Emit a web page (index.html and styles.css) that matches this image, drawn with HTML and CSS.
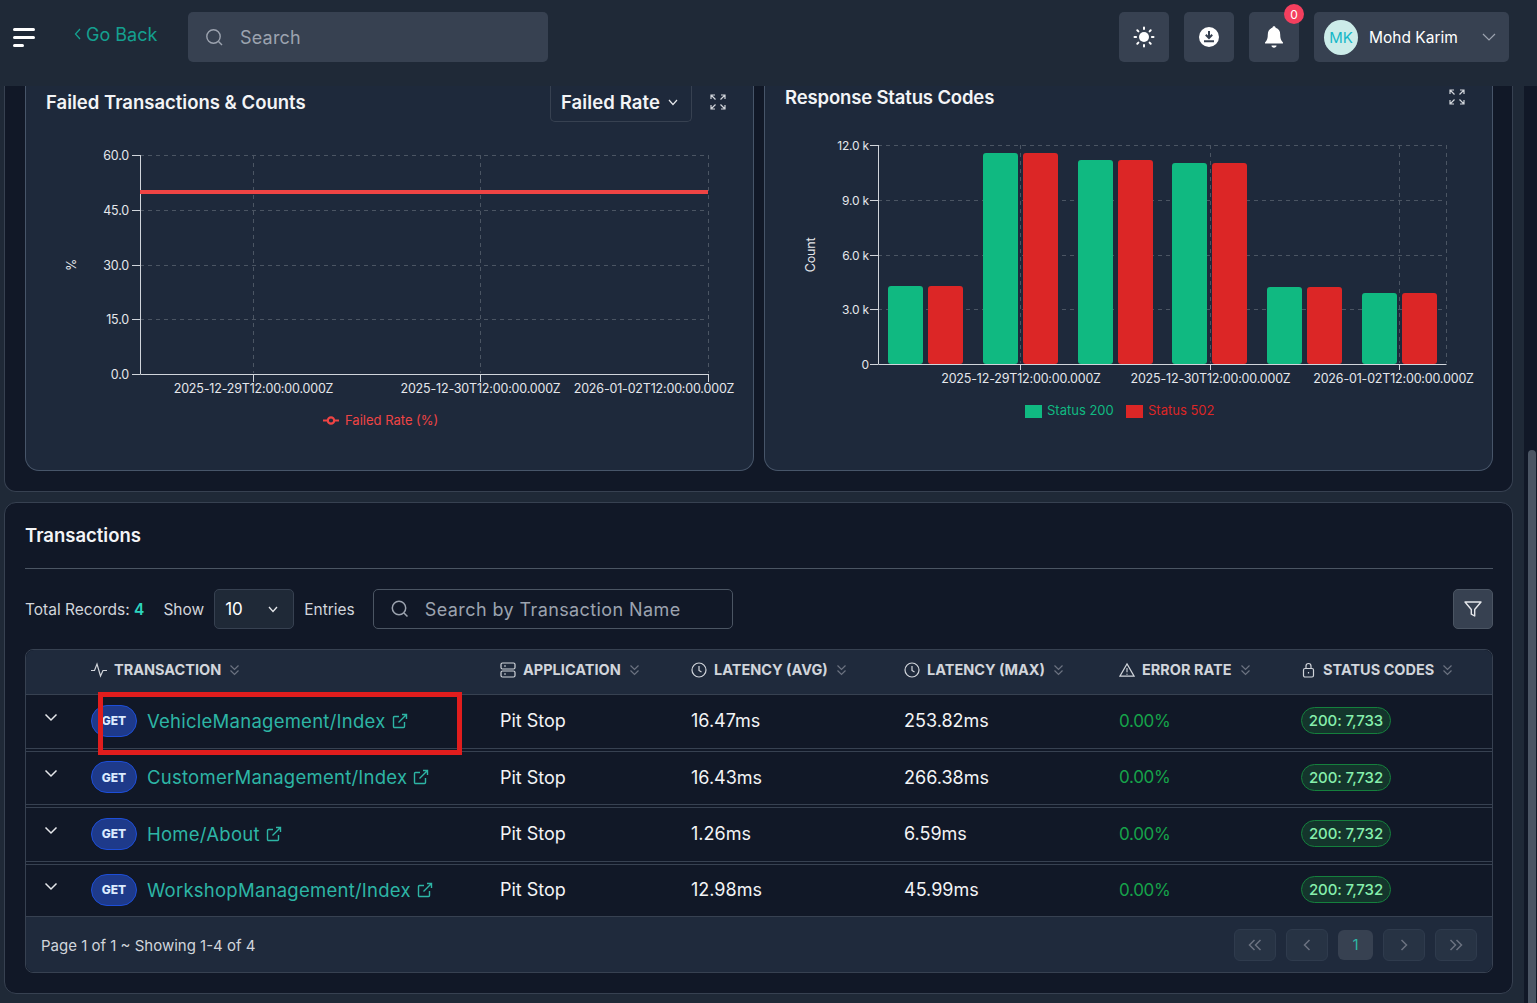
FILE: index.html
```html
<!DOCTYPE html>
<html lang="en">
<head>
<meta charset="utf-8">
<title>Transactions</title>
<link rel="stylesheet" href="styles.css">
</head>
<body>
<header class="topbar">
  <button class="burger" aria-label="Menu"><i class="b1"></i><i class="b2"></i><i class="b3"></i></button>
  <a class="goback"><svg width="8" height="12" viewBox="0 0 8 12"><path d="M6 1 1.5 6 6 11" fill="none" stroke="currentColor" stroke-width="1.3"/></svg>Go Back</a>
  <div class="topsearch"><svg width="20" height="20" viewBox="0 0 20 20" fill="none" stroke="#9ca3af" stroke-width="1.4"><circle cx="9.5" cy="9.5" r="6.7"/><path d="m14.5 14.5 3.5 3.5"/></svg><span>Search</span></div>
  <div class="spacer"></div>
  <button class="iconbtn"><svg width="22" height="22" viewBox="0 0 22 22" fill="#fff"><circle cx="11" cy="11" r="5"/><g stroke="#fff" stroke-width="2" stroke-linecap="round"><path d="M11 1.5v1.6M11 18.9v1.6M1.5 11h1.6M18.9 11h1.6M4.3 4.3l1.1 1.1M16.6 16.6l1.1 1.1M4.3 17.7l1.1-1.1M16.6 5.4l1.1-1.1"/></g></svg></button>
  <button class="iconbtn"><svg width="22" height="22" viewBox="0 0 22 22"><circle cx="11" cy="11" r="10" fill="#fff"/><path d="M11 5v6.5M7.8 8.8 11 12l3.2-3.2M6 15.3h10" fill="none" stroke="#374151" stroke-width="2"/></svg></button>
  <button class="iconbtn bell"><svg width="20" height="24" viewBox="0 0 20 24" fill="#fff"><path d="M10 1.2c1 0 1.6.7 1.6 1.6 3.2.8 4.6 3.4 4.6 6.6 0 3.5.7 6 2.6 7.9.5.6.2 1.3-.6 1.3H1.8c-.8 0-1.1-.7-.6-1.3 1.9-1.9 2.6-4.4 2.6-7.9 0-3.2 1.4-5.8 4.6-6.6 0-.9.6-1.6 1.6-1.6z"/><path d="M7.5 20.5h5c0 1.3-1 2.2-2.5 2.2s-2.5-.9-2.5-2.2z"/></svg><span class="badge">0</span></button>
  <div class="user"><span class="avatar">MK</span><span class="uname">Mohd Karim</span><svg width="14" height="8" viewBox="0 0 14 8"><path d="m1 1 6 6 6-6" fill="none" stroke="#9ca3af" stroke-width="1.2"/></svg></div>
</header>

<main class="content">
  <section class="panel charts">
    <article class="chartcard left">
      <div class="charthead">
        <h2>Failed Transactions &amp; Counts</h2>
        <div class="headtools">
          <div class="rateselect">Failed Rate <svg width="10" height="7" viewBox="0 0 10 7"><path d="m1 1 4 4.5L9 1" fill="none" stroke="#e5e7eb" stroke-width="1.2"/></svg></div>
          <svg class="expand" width="16" height="16" viewBox="0 0 16 16" fill="none" stroke="#d1d5db" stroke-width="1.2"><path d="M1 5V1h4M1 1l4.5 4.5M11 1h4v4M15 1l-4.5 4.5M1 11v4h4M1 15l4.5-4.5M15 11v4h-4M15 15l-4.5-4.5"/></svg>
        </div>
      </div>
      <svg class="plot" width="728" height="310" viewBox="1 30 728 310">
        <g class="grid">
          <path d="M115 62.5H683M115 117.5H683M115 172.5H683M115 226.5H683M228.5 62V280M455.5 62V280M683.5 62V280"/>
        </g>
        <path class="axis" d="M115.5 62V281.5H683.5M107 62.5h8M107 117.5h8M107 172.5h8M107 226.5h8M107 281.5h8M228.5 281v8M455.5 281v8M683.5 281v8"/>
        <rect x="115" y="97" width="568" height="4" fill="#ef4444"/>
        <g class="ylab" text-anchor="end">
          <text x="104" y="67">60.0</text><text x="104" y="122">45.0</text><text x="104" y="177">30.0</text><text x="104" y="231">15.0</text><text x="104" y="286">0.0</text>
        </g>
        <text class="ylab" transform="translate(51 172) rotate(-90)" text-anchor="middle">%</text>
        <g class="ylab" text-anchor="middle">
          <text x="228.5" y="300">2025-12-29T12:00:00.000Z</text><text x="455.5" y="300">2025-12-30T12:00:00.000Z</text><text x="629" y="300">2026-01-02T12:00:00.000Z</text>
        </g>
        <path d="M298 327.5h16" stroke="#ef4444" stroke-width="2"/><circle cx="306" cy="327.5" r="3.2" fill="#1e293b" stroke="#ef4444" stroke-width="2.2"/>
        <text class="legend" x="320" y="332" fill="#ef4444">Failed Rate (%)</text>
      </svg>
    </article>
    <article class="chartcard right">
      <div class="charthead">
        <h2 class="raised">Response Status Codes</h2>
        <div class="headtools">
          <svg class="expand raisedicon" width="16" height="16" viewBox="0 0 16 16" fill="none" stroke="#d1d5db" stroke-width="1.2"><path d="M1 5V1h4M1 1l4.5 4.5M11 1h4v4M15 1l-4.5 4.5M1 11v4h4M1 15l4.5-4.5M15 11v4h-4M15 15l-4.5-4.5"/></svg>
        </div>
      </div>
      <svg class="plot" width="728" height="310" viewBox="1 30 728 310">
        <g class="grid">
          <path d="M114 52.5H682M114 107.5H682M114 162.5H682M114 216.5H682M256.5 52V270M446.5 52V270M635.5 52V270M682.5 52V270"/>
        </g>
        <g class="bars">
          <rect class="g" x="124" y="193" width="35" height="78" rx="3"/><rect class="r" x="164" y="193" width="35" height="78" rx="3"/>
          <rect class="g" x="219" y="60" width="35" height="211" rx="3"/><rect class="r" x="259" y="60" width="35" height="211" rx="3"/>
          <rect class="g" x="314" y="67" width="35" height="204" rx="3"/><rect class="r" x="354" y="67" width="35" height="204" rx="3"/>
          <rect class="g" x="408" y="70" width="35" height="201" rx="3"/><rect class="r" x="448" y="70" width="35" height="201" rx="3"/>
          <rect class="g" x="503" y="194" width="35" height="77" rx="3"/><rect class="r" x="543" y="194" width="35" height="77" rx="3"/>
          <rect class="g" x="598" y="200" width="35" height="71" rx="3"/><rect class="r" x="638" y="200" width="35" height="71" rx="3"/>
        </g>
        <path class="axis" d="M114.5 52V271.5H682.5M106 52.5h8M106 107.5h8M106 162.5h8M106 216.5h8M106 271.5h8M256.5 271v6M446.5 271v6M635.5 271v6"/>
        <g class="ylab small" text-anchor="end">
          <text x="105" y="57">12.0 k</text><text x="105" y="112">9.0 k</text><text x="105" y="167">6.0 k</text><text x="105" y="221">3.0 k</text><text x="105" y="276">0</text>
        </g>
        <text class="ylab" transform="translate(51 162) rotate(-90)" text-anchor="middle">Count</text>
        <g class="ylab" text-anchor="middle">
          <text x="257" y="290">2025-12-29T12:00:00.000Z</text><text x="446.5" y="290">2025-12-30T12:00:00.000Z</text><text x="629.5" y="290">2026-01-02T12:00:00.000Z</text>
        </g>
        <rect class="g" x="261" y="312" width="17" height="13"/>
        <text class="legend" x="283" y="322" fill="#10b981">Status 200</text>
        <rect class="r" x="362" y="312" width="17" height="13"/>
        <text class="legend" x="384" y="322" fill="#dc2626">Status 502</text>
      </svg>
    </article>
  </section>

  <section class="panel transactions">
    <h3>Transactions</h3>
    <div class="toolbar">
      <span class="tlabel">Total Records: <b>4</b></span>
      <span class="tlabel">Show</span>
      <div class="entries"><span>10</span><svg width="10" height="7" viewBox="0 0 10 7"><path d="m1 1 4 4.5L9 1" fill="none" stroke="#e5e7eb" stroke-width="1.3"/></svg></div>
      <span class="tlabel">Entries</span>
      <div class="txsearch"><svg width="20" height="20" viewBox="0 0 20 20" fill="none" stroke="#9ca3af" stroke-width="1.5"><circle cx="9" cy="9" r="6.7"/><path d="m14 14 3.5 3.5"/></svg><span>Search by Transaction Name</span></div>
      <div class="spacer"></div>
      <button class="filter"><svg width="20" height="20" viewBox="0 0 20 20"><path d="M2 3h16l-6.3 7.5V17l-3.4-1.800v-4.700z" fill="none" stroke="#e5e7eb" stroke-width="1.4" stroke-linejoin="round"/></svg></button>
    </div>

    <div class="tablewrap">
      <div class="row thead">
        <div class="c0"></div>
        <div class="c1 th"><svg width="16" height="16" viewBox="0 0 16 16" class="thi"><path d="M0 8.5h3.5L6 2l3.5 12L12 8.5h4"/></svg>TRANSACTION<svg class="sort" width="11" height="12" viewBox="0 0 11 12"><path d="m1.500 1.500 4 4 4-4M1.500 6.500l4 4 4-4"/></svg></div>
        <div class="c2 th"><svg width="16" height="16" viewBox="0 0 16 16" class="thi"><rect x="1" y="1" width="14" height="6" rx="1.5"/><rect x="1" y="9" width="14" height="6" rx="1.5"/><path d="M4 4h2M4 12h2"/></svg>APPLICATION<svg class="sort" width="11" height="12" viewBox="0 0 11 12"><path d="m1.500 1.500 4 4 4-4M1.500 6.500l4 4 4-4"/></svg></div>
        <div class="c3 th"><svg width="16" height="16" viewBox="0 0 16 16" class="thi"><circle cx="8" cy="8" r="7"/><path d="M8 4v4.5l2.5 1.5"/></svg>LATENCY (AVG)<svg class="sort" width="11" height="12" viewBox="0 0 11 12"><path d="m1.500 1.500 4 4 4-4M1.500 6.500l4 4 4-4"/></svg></div>
        <div class="c4 th"><svg width="16" height="16" viewBox="0 0 16 16" class="thi"><circle cx="8" cy="8" r="7"/><path d="M8 4v4.5l2.5 1.5"/></svg>LATENCY (MAX)<svg class="sort" width="11" height="12" viewBox="0 0 11 12"><path d="m1.500 1.500 4 4 4-4M1.500 6.500l4 4 4-4"/></svg></div>
        <div class="c5 th"><svg width="16" height="16" viewBox="0 0 17 16" class="thi"><path d="M8.5 1.500 16 14.500H1zM8.500 6v4.500M8.500 12v1"/></svg>ERROR RATE<svg class="sort" width="11" height="12" viewBox="0 0 11 12"><path d="m1.500 1.500 4 4 4-4M1.500 6.500l4 4 4-4"/></svg></div>
        <div class="c6 th"><svg width="15" height="16" viewBox="0 0 14 16" class="thi"><rect x="2" y="6.5" width="10" height="8.5" rx="1.5"/><path d="M4.500 6.500V4a2.500 2.500 0 0 1 5 0v2.500M7 10v1.500"/></svg>STATUS CODES<svg class="sort" width="11" height="12" viewBox="0 0 11 12"><path d="m1.500 1.500 4 4 4-4M1.500 6.500l4 4 4-4"/></svg></div>
      </div>

      <div class="row body">
        <div class="c0"><svg class="chev" width="14" height="9" viewBox="0 0 14 9"><path d="m1.500 1.500 5.500 5.500 5.500-5.500"/></svg></div>
        <div class="c1 tx"><span class="get">GET</span><a>VehicleManagement/Index</a><svg class="ext" width="16" height="16" viewBox="0 0 16 16"><path d="M12.500 9v4.500a1 1 0 0 1-1 1h-9a1 1 0 0 1-1-1v-9a1 1 0 0 1 1-1H7M10 1.500h4.500V6M14.500 1.500l-8 8"/></svg></div>
        <div class="c2">Pit Stop</div><div class="c3">16.47ms</div><div class="c4">253.82ms</div><div class="c5 ok">0.00%</div><div class="c6"><span class="pill">200: 7,733</span></div>
      </div>
      <div class="row body">
        <div class="c0"><svg class="chev" width="14" height="9" viewBox="0 0 14 9"><path d="m1.500 1.500 5.500 5.500 5.500-5.500"/></svg></div>
        <div class="c1 tx"><span class="get">GET</span><a>CustomerManagement/Index</a><svg class="ext" width="16" height="16" viewBox="0 0 16 16"><path d="M12.500 9v4.500a1 1 0 0 1-1 1h-9a1 1 0 0 1-1-1v-9a1 1 0 0 1 1-1H7M10 1.500h4.500V6M14.500 1.500l-8 8"/></svg></div>
        <div class="c2">Pit Stop</div><div class="c3">16.43ms</div><div class="c4">266.38ms</div><div class="c5 ok">0.00%</div><div class="c6"><span class="pill">200: 7,732</span></div>
      </div>
      <div class="row body">
        <div class="c0"><svg class="chev" width="14" height="9" viewBox="0 0 14 9"><path d="m1.500 1.500 5.500 5.500 5.500-5.500"/></svg></div>
        <div class="c1 tx"><span class="get">GET</span><a>Home/About</a><svg class="ext" width="16" height="16" viewBox="0 0 16 16"><path d="M12.500 9v4.500a1 1 0 0 1-1 1h-9a1 1 0 0 1-1-1v-9a1 1 0 0 1 1-1H7M10 1.500h4.500V6M14.500 1.500l-8 8"/></svg></div>
        <div class="c2">Pit Stop</div><div class="c3">1.26ms</div><div class="c4">6.59ms</div><div class="c5 ok">0.00%</div><div class="c6"><span class="pill">200: 7,732</span></div>
      </div>
      <div class="row body last">
        <div class="c0"><svg class="chev" width="14" height="9" viewBox="0 0 14 9"><path d="m1.500 1.500 5.500 5.500 5.500-5.500"/></svg></div>
        <div class="c1 tx"><span class="get">GET</span><a>WorkshopManagement/Index</a><svg class="ext" width="16" height="16" viewBox="0 0 16 16"><path d="M12.500 9v4.500a1 1 0 0 1-1 1h-9a1 1 0 0 1-1-1v-9a1 1 0 0 1 1-1H7M10 1.500h4.500V6M14.500 1.500l-8 8"/></svg></div>
        <div class="c2">Pit Stop</div><div class="c3">12.98ms</div><div class="c4">45.99ms</div><div class="c5 ok">0.00%</div><div class="c6"><span class="pill">200: 7,732</span></div>
      </div>

      <div class="pager">
        <span class="pageinfo">Page 1 of 1 ~ Showing 1-4 of 4</span>
        <div class="spacer"></div>
        <button class="pg"><svg width="14" height="12" viewBox="0 0 14 12"><path d="M6.500 1 1.500 6l5 5M12.500 1l-5 5 5 5"/></svg></button>
        <button class="pg"><svg width="8" height="12" viewBox="0 0 8 12"><path d="M6.500 1 1.500 6l5 5"/></svg></button>
        <button class="pg current">1</button>
        <button class="pg"><svg width="8" height="12" viewBox="0 0 8 12"><path d="m1.500 1 5 5-5 5"/></svg></button>
        <button class="pg"><svg width="14" height="12" viewBox="0 0 14 12"><path d="m1.500 1 5 5-5 5M7.500 1l5 5-5 5"/></svg></button>
      </div>
      <div class="redbox"></div>
    </div>
  </section>
</main>
<div class="scrolltrack"><div class="scrollthumb"></div></div>
</body>
</html>
```
FILE: styles.css
```css
* { box-sizing: border-box; }
html, body { margin: 0; height: 100%; }
body {
  background: #1f2937;
  color: #fff;
  font-family: "Inter", "Noto Sans", sans-serif;
  overflow: hidden;
  position: relative;
}
button { font-family: inherit; border: 0; padding: 0; color: inherit; }
svg { display: block; flex: none; }
.spacer { flex: 1; }

.topbar {
  height: 86px;
  display: flex;
  align-items: flex-start;
  padding: 12px 28px 0 13px;
  background: #1f2937;
  position: relative;
  z-index: 2;
}
.burger { width: 22px; height: 20px; margin-top: 16px; background: none; display: flex; flex-direction: column; gap: 5px; }
.burger i { display: block; height: 3px; background: #fff; border-radius: 2px; }
.burger .b1 { width: 22px; }
.burger .b2 { width: 22px; }
.burger .b3 { width: 11px; }
.goback { margin: 12px 0 0 39px; width: 114px; height: 20px; display: flex; align-items: center; gap: 4px; color: #14a090; font-size: 18px; }
.topsearch { width: 360px; height: 50px; background: #374151; border-radius: 5px; display: flex; align-items: center; gap: 16px; padding-left: 16px; color: #9ca3af; font-size: 18px; letter-spacing: .2px; }
.iconbtn { width: 50px; height: 50px; background: #374151; border-radius: 5px; margin-right: 15px; display: flex; align-items: center; justify-content: center; position: relative; }
.badge { position: absolute; top: -8px; right: -5px; width: 20px; height: 20px; border-radius: 50%; background: #f43f5e; color: #fff; font-size: 12px; display: flex; align-items: center; justify-content: center; }
.user { width: 195px; height: 50px; background: #374151; border-radius: 5px; display: flex; align-items: center; padding: 0 13px 0 10px; }
.avatar { width: 34px; height: 35px; border-radius: 50%; background: #ccece9; color: #14b8c8; font-size: 15px; display: flex; align-items: center; justify-content: center; }
.uname { margin-left: 11px; flex: 1; font-size: 15.5px; }

.content { display: flex; flex-direction: column; gap: 10px; padding: 0 24px 0 4px; }
.panel { background: #111827; border: 1px solid #374151; border-radius: 12px; }
.charts {
  height: 406px;
  border-top: 0;
  border-radius: 0 0 12px 12px;
  padding: 0 19px 20px 20px;
  display: flex;
  gap: 10px;
}
.chartcard { width: 729px; background: #1e293b; border: 1px solid #475569; border-top: 0; border-radius: 0 0 14px 14px; }
.charthead { display: flex; height: 37px; justify-content: space-between; align-items: flex-start; padding: 0 27px 0 20px; }
.charthead h2 { margin: 4px 0 0; font-size: 18.5px; line-height: 24px; font-weight: 600; color: #f3f4f6; }
.charthead h2.raised { margin-top: -1px; letter-spacing: -.15px; }
.headtools { display: flex; align-items: flex-start; gap: 18px; }
.rateselect { width: 142px; height: 36px; border: 1px solid #374151; border-top: 0; border-radius: 0 0 5px 5px; display: flex; align-items: center; gap: 8px; padding: 0 0 3px 10px; font-size: 18.5px; font-weight: 600; letter-spacing: .1px; color: #f3f4f6; }
.expand { margin-top: 8px; }
.raisedicon { margin-top: 3px; }

.grid path { fill: none; stroke: #4b5563; stroke-dasharray: 4 4; stroke-width: 1; }
.axis { fill: none; stroke: #d1d5db; stroke-width: 1; }
.ylab { font-size: 12.5px; fill: #e5e7eb; letter-spacing: -.18px; }
.ylab text { font-size: 12.5px; }
.small text { font-size: 12px; }
.legend { font-size: 13px; }
.g { fill: #10b981; }
.r { fill: #dc2626; }

.transactions { height: 492px; padding: 0 19px 0 20px; }
.transactions h3 { margin: 0; height: 66px; padding-top: 20px; font-size: 18.5px; line-height: 24px; font-weight: 600; color: #f3f4f6; border-bottom: 1px solid #4b5563; }
.toolbar { display: flex; align-items: center; height: 40px; margin-top: 20px; font-size: 15.5px; }
.tlabel { color: #d1d5db; }
.tlabel b { color: #2dd4bf; font-weight: 600; }
.tlabel:nth-child(1) { margin-right: 19px; }
.tlabel:nth-child(2) { margin-right: 10px; }
.tlabel:nth-child(4) { margin: 0 18px 0 10px; }
.entries { width: 80px; height: 40px; background: #1f2937; border: 1px solid #374151; border-radius: 5px; display: flex; align-items: center; justify-content: space-between; padding: 0 15px 0 10px; font-size: 17px; }
.txsearch { width: 360px; height: 40px; border: 1px solid #4b5563; border-radius: 5px; display: flex; align-items: center; gap: 15px; padding-left: 16px; color: #9ca3af; font-size: 18px; letter-spacing: .4px; }
.filter { width: 40px; height: 40px; background: #374151; border: 1px solid #4b5563; border-radius: 5px; display: flex; align-items: center; justify-content: center; }

.tablewrap { margin-top: 20px; border: 1px solid #374151; border-radius: 8px; position: relative; height: 324px; }
.row { display: flex; align-items: center; }
.thead { height: 45px; padding-bottom: 5px; background: #1f2a3c; border-bottom: 1px solid #374151; border-radius: 8px 8px 0 0; }
.c0 { width: 65px; padding: 0 0 7px 18px; }
.c1 { width: 409px; }
.c2 { width: 191px; }
.c3 { width: 213px; }
.c4 { width: 215px; }
.c5 { width: 182px; }
.c6 { flex: 1; }
.th { display: flex; align-items: center; gap: 7px; font-size: 14.5px; font-weight: 700; color: #d1d5db; }
.thi { fill: none; stroke: #d1d5db; stroke-width: 1.2; }
.sort { fill: none; stroke: #6b7280; stroke-width: 1.2; margin-left: 1px; }
.body { height: 56.5px; padding-bottom: 1.5px; font-size: 18px; color: #f3f4f6; border-bottom: 4px double #374151; }
.body.last { border-bottom: 1px solid #374151; height: 52.5px; padding-bottom: 1px; }
.chev { fill: none; stroke: #e5e7eb; stroke-width: 1.5; }
.tx { display: flex; align-items: center; gap: 6px; }
.tx a { color: #2db5a5; font-size: 18.5px; letter-spacing: .25px; }
.get { width: 46px; height: 32px; margin-right: 4px; border-radius: 16px; background: #1e3a8a; border: 1px solid #1d4ed8; color: #dbeafe; font-size: 12px; font-weight: 800; display: flex; align-items: center; justify-content: center; }
.ext { fill: none; stroke: #2db5a5; stroke-width: 1.4; }
.ok { color: #16a34a; font-size: 17px; letter-spacing: -.3px; }
.pill { display: inline-block; width: 90px; height: 27px; line-height: 25px; border-radius: 14px; background: #14352c; border: 1px solid #15803d; color: #86efac; font-size: 15px; font-weight: 500; text-align: center; letter-spacing: -.1px; }

.pager { height: 55px; background: #1f2a3c; border-radius: 0 0 8px 8px; display: flex; align-items: center; padding: 0 15px; gap: 10px; }
.pageinfo { font-size: 15px; color: #d1d5db; padding-top: 2px; }
.pg { width: 42px; height: 32px; border-radius: 6px; background: #273344; border: 1px solid #2f3b4d; display: flex; align-items: center; justify-content: center; }
.pg svg { fill: none; stroke: #6b7280; stroke-width: 1.5; }
.pg.current { width: 35px; height: 30px; background: #374151; border: 0; color: #2db5a5; font-size: 15px; }

.redbox { position: absolute; left: 72px; top: 42px; width: 364px; height: 63px; border: 5px solid #e11d1d; pointer-events: none; }
.scrolltrack { position: absolute; right: 0; top: 0; bottom: 0; width: 13px; background: #111827; padding: 450px 1px 0 4px; }
.scrollthumb { height: 100%; background: #4b5563; border-radius: 4px 4px 0 0; }
```
